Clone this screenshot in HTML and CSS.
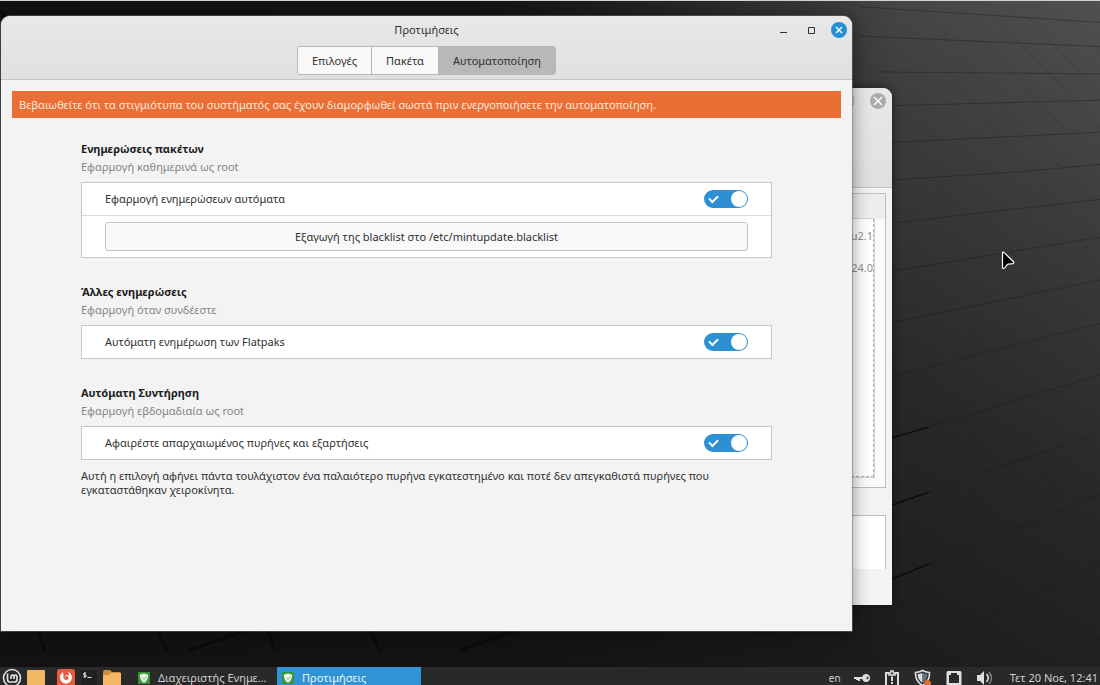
FILE: index.html
```html
<!DOCTYPE html>
<html lang="el">
<head>
<meta charset="utf-8">
<meta name="viewport" content="width=device-width, initial-scale=1">
<title>Προτιμήσεις</title>
<link rel="stylesheet" href="styles.css">
</head>
<body>
<div class="screen">
  <div class="desktop">
    <svg class="wallpaper" viewBox="0 0 1100 685" preserveAspectRatio="none" aria-hidden="true">
      <defs>
        <linearGradient id="base" gradientUnits="userSpaceOnUse" x1="1100" y1="0" x2="720" y2="620">
          <stop offset="0" stop-color="#505050"/>
          <stop offset=".28" stop-color="#3c3c3c"/>
          <stop offset=".6" stop-color="#282828"/>
          <stop offset="1" stop-color="#1a1a1a"/>
        </linearGradient>
        <linearGradient id="dim" x1="0" y1="0" x2="1" y2="0">
          <stop offset="0" stop-color="#121212"/>
          <stop offset=".45" stop-color="#121212" stop-opacity=".9"/>
          <stop offset=".82" stop-color="#121212" stop-opacity="0"/>
        </linearGradient>
      </defs>
      <rect width="1100" height="685" fill="url(#base)"/>
      <rect width="1100" height="685" fill="url(#dim)"/>
      <g fill="none" stroke="#151515" stroke-opacity=".38">
        <path d="M860 6L1100 22M860 36L1100 47M880 73L1100 75M880 108L1100 102M880 146L1100 135M880 185L1028 175L1100 168M880 230L1100 204M880 280L1100 243M880 333L1100 287M880 389L1100 332M929 438L1060 397L1100 384M929 505L1100 443M893 595L1100 507M925 664L1100 578M1085 662L1100 655"/>
      </g>
      <g fill="none" stroke="#0c0c0c" stroke-width="1.500">
        <path d="M880 453L929 438M880 523L929 505M850 612L929 579"/>
      </g>
      <g fill="none" stroke="#1c1c1c" stroke-opacity=".16">
        <path d="M897 8L950 73L993 133L1027 173L1080 230L1100 252M925 8L975 73L1020 133L1065 175L1100 215M955 10L1010 73L1100 170M990 12L1050 75L1100 130M1025 14L1100 95M1062 16L1100 55M895 130L940 190L1010 280M893 330L940 390M930 290L1020 400M980 215L1050 310L1100 370M960 430L990 470M1010 440L1060 510M970 500L1010 550M1010 545L1050 600M1045 620L1080 662"/>
      </g>
      <g fill="none" stroke="#080808" stroke-opacity=".7" stroke-width="3">
        <path d="M32 631L45 668M150 631L167 668M262 631L275 668M362 631L380 668M0 10L6 16M190 668L290 631M460 668L560 631"/>
      </g>
    </svg>

    <section class="window window-back" aria-label="Διαχειριστής Ενημερώσεων">
      <header class="back-header">
        <span class="back-max"></span>
        <button class="close close-idle" type="button" aria-label="Κλείσιμο παραθύρου"><svg viewBox="0 0 16 16"><path d="M4 4l8 8M12 4l-8 8"/></svg></button>
      </header>
      <div class="back-body">
        <div class="list-frame">
          <div class="list-head"></div>
          <div class="list">
            <span>ubuntu2.1</span>
            <span>24.0</span>
          </div>
        </div>
        <div class="details"></div>
      </div>
    </section>

    <main class="window window-front">
      <header class="header">
        <div class="titlebar">
          <h1 class="title">Προτιμήσεις</h1>
          <div class="controls">
            <button class="control" type="button" aria-label="Ελαχιστοποίηση"><svg viewBox="0 0 16 16"><path d="M5 10.500h7"/></svg></button>
            <button class="control" type="button" aria-label="Μεγιστοποίηση"><svg viewBox="0 0 16 16"><path d="M5.500 5.500h6v6h-6z"/></svg></button>
            <button class="close" type="button" aria-label="Κλείσιμο"><svg viewBox="0 0 16 16"><path d="M5 5l6 6M11 5l-6 6"/></svg></button>
          </div>
        </div>
        <nav class="tabs">
          <button class="tab" type="button">Επιλογές</button>
          <button class="tab" type="button">Πακέτα</button>
          <button class="tab tab-active" type="button">Αυτοματοποίηση</button>
        </nav>
      </header>

      <p class="banner">Βεβαιωθείτε ότι τα στιγμιότυπα του συστήματός σας έχουν διαμορφωθεί σωστά πριν ενεργοποιήσετε την αυτοματοποίηση.</p>

      <div class="content">
        <section class="group">
          <h2 class="group-title">Ενημερώσεις πακέτων</h2>
          <p class="group-note">Εφαρμογή καθημερινά ως root</p>
          <div class="card">
            <div class="row">
              <label for="packages">Εφαρμογή ενημερώσεων αυτόματα</label>
              <input class="switch" type="checkbox" id="packages" checked>
            </div>
            <div class="row-button">
              <button class="export" type="button">Εξαγωγή της blacklist στο /etc/mintupdate.blacklist</button>
            </div>
          </div>
        </section>
        <section class="group">
          <h2 class="group-title">Άλλες ενημερώσεις</h2>
          <p class="group-note">Εφαρμογή όταν συνδέεστε</p>
          <div class="card">
            <div class="row">
              <label for="flatpaks">Αυτόματη ενημέρωση των Flatpaks</label>
              <input class="switch" type="checkbox" id="flatpaks" checked>
            </div>
          </div>
        </section>
        <section class="group">
          <h2 class="group-title">Αυτόματη Συντήρηση</h2>
          <p class="group-note">Εφαρμογή εβδομαδιαία ως root</p>
          <div class="card">
            <div class="row">
              <label for="kernels">Αφαιρέστε απαρχαιωμένος πυρήνες και εξαρτήσεις</label>
              <input class="switch" type="checkbox" id="kernels" checked>
            </div>
          </div>
          <p class="hint">Αυτή η επιλογή αφήνει πάντα τουλάχιστον ένα παλαιότερο πυρήνα εγκατεστημένο και ποτέ δεν απεγκαθιστά πυρήνες που εγκαταστάθηκαν χειροκίνητα.</p>
        </section>
      </div>
    </main>

    <svg class="pointer" viewBox="0 0 16 20" aria-hidden="true"><path d="M1.500 1.500v15.500q1.500 1 2.600-.5l2-2.600q.5-.6 1.200-.7l4.500-.6q1.700-.5.7-1.900L3 1.400q-.9-.6-1.500.1z" fill="#000" stroke="#fff" stroke-width="1.200"/></svg>
  </div>

  <footer class="panel">
    <div class="launchers">
      <button class="item" type="button" aria-label="Μενού"><svg width="20" height="22" viewBox="0 0 20 22"><g fill="none" stroke="#dedede"><circle cx="10" cy="11" r="8.500" stroke-width="1.600"/><path stroke-width="1.700" d="M5.500 6.500v6q0 2.500 2.500 2.500h4.500q2.500 0 2.500-2.500V9.700q0-1.600-1.500-1.600t-1.500 1.600V12M12 9.700q0-1.600-1.500-1.600T9 9.700V12"/></g></svg></button>
      <button class="item" type="button" aria-label="Επιφάνεια εργασίας"><svg width="18" height="22" viewBox="0 0 18 22"><rect y="3" width="18" height="18" rx="1" fill="#f2b765"/></svg></button>
      <button class="item item-gap" type="button" aria-label="Firefox"><svg width="18" height="22" viewBox="0 0 18 22"><rect y="2" width="18" height="18" rx="3" fill="#ea5b3b"/><path d="M6 5L3.500 7.500Q2 12 5 15q4 3.500 8 0 3.500-4 .5-8.500Q12 5 10.500 5q2 2 1.500 4-1-1.500-2.500-1-2 .5-2 2.500 1 1 2 .5Q8 13.500 7 12 6 11 6.500 9z" fill="#fff"/><circle cx="9.500" cy="11" r="2" fill="#ea5b3b"/></svg></button>
      <button class="item" type="button" aria-label="Τερματικό"><svg width="18" height="22" viewBox="0 0 18 22"><rect y="2" width="18" height="18" rx="2" fill="#202021" stroke="#444" stroke-width=".6"/><path d="M6 6.200H4.500q-1 0-1 .9t1 .9h.8q1 0 1 .9t-1 .9H3.400M4.900 5v6M7.500 10.500h4" fill="none" stroke="#e4e4e4"/></svg></button>
      <button class="item" type="button" aria-label="Αρχεία"><svg width="18" height="22" viewBox="0 0 18 22"><path d="M0 5q0-2 2-2h5l2 2h7q2 0 2 2v14H0z" fill="#c98d43"/><path d="M0 8h6l2-2h10v15H0z" fill="#f3b868"/></svg></button>
    </div>
    <div class="tasks">
      <button class="task" type="button"><svg class="task-icon" viewBox="0 0 12 12"><rect width="12" height="12" rx="1" fill="#359536"/><path d="M6 1.500l4.300 1.300Q10.200 8.500 6 10.800 1.800 8.500 1.700 2.800z" fill="#eef8ec"/><path d="M4 5.500L6 7.500 8.500 4.500" fill="none" stroke="#72b66d"/></svg><span>Διαχειριστής Ενημε…</span></button>
      <button class="task task-active" type="button"><svg class="task-icon" viewBox="0 0 12 12"><rect width="12" height="12" rx="1" fill="#359536"/><path d="M6 1.500l4.300 1.300Q10.200 8.500 6 10.800 1.800 8.500 1.700 2.800z" fill="#eef8ec"/><path d="M4 5.500L6 7.500 8.500 4.500" fill="none" stroke="#72b66d"/></svg><span>Προτιμήσεις</span></button>
    </div>
    <div class="tray">
      <button class="item lang" type="button">en</button>
      <button class="item" type="button" aria-label="Κλειδοθήκη"><svg width="18" height="22" viewBox="0 0 18 22"><path fill="#dedede" fill-rule="evenodd" d="M1 10h8.200Q10 7 13 7q4 .3 4 4t-4 4q-3 0-3.800-3H7v2H5v-1H3v-1H1zM13.700 9.700v2.600h1.600V9.700z"/></svg></button>
      <button class="item" type="button" aria-label="Αναφορές"><svg width="18" height="22" viewBox="0 0 18 22"><path fill="none" stroke="#dedede" stroke-width="2" d="M6 6H3v13h12V6h-3"/><path fill="none" stroke="#dedede" stroke-width="1.600" d="M6 8V6h1.500q0-2.200 1.500-2.200T10.500 6H12v2z"/><path fill="#dedede" d="M8 9.500h2V14H8zM8 15h2v2H8z"/></svg></button>
      <button class="item" type="button" aria-label="Ενημερώσεις"><svg width="20" height="22" viewBox="0 0 20 22"><path d="M9.500 3.500Q12 5 16.500 5.500 17 14 9.500 18.500 2 14 2.500 5.500 7 5 9.500 3.500z" fill="#29343d" stroke="#dedede" stroke-width="1.600"/><path d="M9.500 6Q7 7 4.600 7.200 5 13 9.500 16z" fill="#dedede"/><path d="M9.500 6q2.500 1 4.900 1.200Q14 13 9.500 16z" fill="#6d7479"/><circle cx="14.500" cy="16.500" r="3.500" fill="#e66a38"/></svg></button>
      <button class="item" type="button" aria-label="Δίκτυο"><svg width="18" height="22" viewBox="0 0 18 22"><path fill="#dedede" fill-rule="evenodd" d="M3 4h12q1.500 0 1.500 1.500V18h-15V5.500Q1.500 4 3 4zM6 6v2H4v8h10V8h-2V6z"/></svg></button>
      <button class="item" type="button" aria-label="Ένταση"><svg width="20" height="22" viewBox="0 0 20 22"><path fill="#dedede" d="M2 8h3l4-4v14l-4-4H2z"/><path fill="none" stroke="#dedede" stroke-width="1.600" d="M11.500 7q3.500 4 0 8"/><path fill="none" stroke="#858585" stroke-width="1.400" d="M14 5q5 6 0 12"/></svg></button>
      <button class="item clock" type="button">Τετ 20 Νοε, 12:41</button>
    </div>
  </footer>
</div>
</body>
</html>
```
FILE: styles.css
```css
* {
  box-sizing: border-box;
}

body {
  margin: 0;
  font: 11px/18px "Noto Sans", "Open Sans", sans-serif;
  color: #303030;
}

button {
  margin: 0;
  padding: 0;
  border: 0;
  background: none;
  font: inherit;
  color: inherit;
}

h1, h2, p {
  margin: 0;
}

svg {
  display: block;
}

.screen {
  display: flex;
  flex-direction: column;
  height: 100vh;
  min-height: 600px;
  overflow: hidden;
  border-top: 1px solid #cfd6cf;
  background: #141414;
}

.desktop {
  position: relative;
  flex: 1;
}

.wallpaper {
  position: absolute;
  inset: 0;
  width: 100%;
  height: 100%;
}

/* Windows */
.window {
  position: absolute;
  display: flex;
  flex-direction: column;
  background: #f3f3f3;
  border-radius: 9px 9px 0 0;
  overflow: hidden;
}

.window-front {
  inset: 15px 248px 36px 1px;
  box-shadow: 0 0 0 1px #70707080, 0 2px 18px #00000070;
}

.window-back {
  inset: 87px 208px 62px 300px;
  box-shadow: 0 0 8px #00000080;
}

.header {
  display: flex;
  flex-direction: column;
  align-items: center;
  gap: 3px;
  background: linear-gradient(#e8e8e8, #e0e0e0);
  border-bottom: 1px solid #c4c4c4;
  padding-bottom: 4px;
}

.titlebar {
  display: grid;
  grid-template-columns: 1fr auto 1fr;
  align-items: center;
  width: 100%;
  height: 27px;
  padding: 0 5px;
}

.title {
  grid-column: 2;
  font-size: 11px;
  font-weight: 400;
  line-height: 18px;
}

.controls {
  display: flex;
  justify-content: flex-end;
  align-items: center;
  gap: 12px;
}

.control,
.close {
  width: 16px;
  height: 16px;
}

.control svg {
  fill: none;
  stroke: #303030;
  stroke-width: 1;
}

.close {
  border-radius: 50%;
  background: #258fd6;
}

.close svg {
  fill: none;
  stroke: #fff;
  stroke-width: 1.4;
}

.close-idle {
  background: #ababab;
}

.tabs {
  display: flex;
  border: 1px solid #b8b8b8;
  border-radius: 3px;
  background: #f8f8f8;
}

.tab {
  height: 27px;
  padding: 0 14px;
}

.tab + .tab {
  border-left: 1px solid #b8b8b8;
}

.tab-active {
  background: #b8b8b8;
}

.banner {
  margin: 11px 11px 0;
  padding: 5px 7px 4px;
  background: #e96f37;
  color: #ffe8d8;
}

.content {
  display: flex;
  flex-direction: column;
  gap: 25px;
  padding: 22px 80px;
}

.group-title {
  font-size: 11px;
  line-height: 18px;
  font-weight: 700;
  color: #1c1c1c;
}

.group-note {
  color: #858585;
}

.card {
  margin-top: 6px;
  border: 1px solid #c6c6c6;
  background: #fff;
}

.row {
  display: flex;
  align-items: center;
  justify-content: space-between;
  height: 32px;
  padding: 0 23px;
}

.row-button {
  padding: 6px 23px;
  border-top: 1px solid #dadada;
}

.export {
  display: block;
  width: 100%;
  height: 29px;
  border: 1px solid #c2c2c2;
  border-radius: 3px;
  background: #f8f8f8;
}

.switch {
  appearance: none;
  display: flex;
  align-items: center;
  justify-content: space-between;
  width: 44px;
  height: 18px;
  margin: 0;
  padding: 0 1px 0 5px;
  border-radius: 9px;
  background: #2d90d3;
}

.switch::before {
  content: "";
  width: 7px;
  height: 4px;
  margin-bottom: 2px;
  border: solid #fff;
  border-width: 0 0 2px 2px;
  transform: rotate(-45deg);
}

.switch::after {
  content: "";
  width: 16px;
  height: 16px;
  border-radius: 50%;
  background: #fff;
}

.hint {
  margin-top: 9px;
  line-height: 14px;
}

/* Window behind */
.back-header {
  display: flex;
  justify-content: flex-end;
  align-items: flex-start;
  gap: 16px;
  height: 100px;
  padding: 5px 6px;
  background: linear-gradient(#e8e8e8, #e0e0e0);
  border-bottom: 1px solid #c4c4c4;
}

.back-max {
  width: 8px;
  height: 8px;
  margin-top: 4px;
  border: 1px solid #b4b4b4;
}

.back-body {
  display: flex;
  flex-direction: column;
  flex: 1;
  gap: 27px;
  padding: 5px 6px 36px;
}

.list-frame {
  display: flex;
  flex-direction: column;
  flex: 1;
  padding-bottom: 10px;
  border: 1px solid #bdbdbd;
  background: #fafafa;
}

.list-head {
  height: 25px;
  background: #eeeeee;
}

.list {
  display: flex;
  flex-direction: column;
  align-items: flex-end;
  gap: 14px;
  flex: 1;
  margin-right: 11px;
  padding-top: 8px;
  border: 1px dashed #b0b0b0;
  border-width: 0 1px 1px 0;
  outline: 1px solid #d4d4d4;
  background: #fff;
  color: #909090;
}

.details {
  height: 54px;
  border: 1px solid #bdbdbd;
  border-bottom: 0;
  background: #fff;
}

.pointer {
  position: absolute;
  left: 91%;
  top: 250px;
  width: 16px;
  height: 20px;
}

/* Panel */
.panel {
  display: flex;
  align-items: flex-start;
  height: 18px;
  overflow: hidden;
  background: #292929;
  color: #d0d0d0;
}

.launchers,
.tray {
  display: flex;
  align-items: flex-start;
}

.launchers {
  gap: 5px;
  padding-left: 2px;
}

.item {
  height: 22px;
}

.item-gap {
  margin-left: 7px;
}

.tasks {
  display: flex;
  flex: 1;
  padding-left: 12px;
}

.task {
  display: flex;
  align-items: center;
  gap: 8px;
  width: 144px;
  height: 22px;
  padding: 0 5px;
  white-space: nowrap;
}

.task-icon {
  flex: none;
  width: 12px;
  height: 12px;
}

.task-active {
  background: #2f93d6;
  color: #eaf4fb;
}

.tray {
  gap: 12px;
  padding-right: 2px;
}

.clock {
  padding-left: 3px;
}

.lang {
  font-size: 10px;
}
```
